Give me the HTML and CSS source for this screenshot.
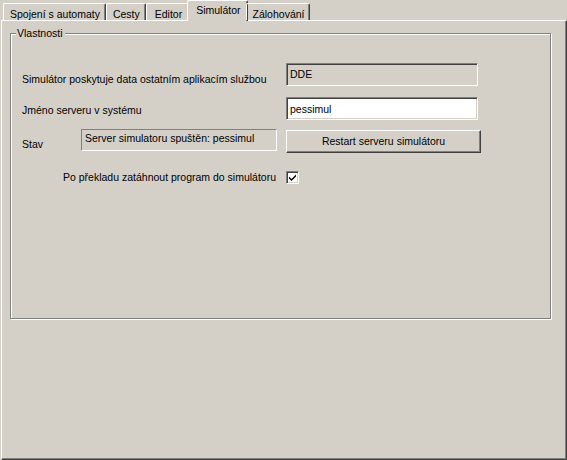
FILE: index.html
```html
<!DOCTYPE html>
<html lang="cs">
<head>
  <meta charset="UTF-8">
  <title>Simulátor</title>
  <link rel="stylesheet" href="styles.css">
</head>
<body>
  <div class="tabs">
    <div class="tab">Spojení s automaty</div>
    <div class="tab">Cesty</div>
    <div class="tab tab-editor">Editor</div>
    <div class="tab active">Simulátor</div>
    <div class="tab">Zálohování</div>
  </div>

  <div class="page">
    <div class="group">
      <span class="legend">Vlastnosti</span>

      <div class="row row-dde">
        <label class="label">Simulátor poskytuje data ostatním aplikacím službou</label>
        <div class="field readonly">DDE</div>
      </div>

      <div class="row row-name">
        <label class="label" for="serverName">Jméno serveru v systému</label>
        <input class="field" id="serverName" type="text" value="pessimul">
      </div>

      <div class="row row-state">
        <span class="label label-short">Stav</span>
        <div class="status">Server simulatoru spuštěn: pessimul</div>
        <button class="btn" type="button">Restart serveru simulátoru</button>
      </div>

      <div class="row row-check">
        <label class="label label-check">Po překladu zatáhnout program do simulátoru</label>
        <span class="checkbox">
          <svg width="9" height="9" viewBox="0 0 9 9">
            <path d="M1 3.5 L3.5 6 L8 1.5 L8 3.5 L3.5 8 L1 5.5 Z" fill="#000"/>
          </svg>
        </span>
      </div>
    </div>
  </div>
</body>
</html>
```

FILE: styles.css
```css
:root {
  --face: #d4d0c8;
  --shadow: #808080;
  --dark: #404040;
  --light: #ffffff;
}

* {
  margin: 0;
  padding: 0;
  box-sizing: border-box;
}

body {
  background: var(--face);
  font-family: 'Liberation Sans', Arial, sans-serif;
  font-size: 10.5px;
  line-height: 13px;
  color: #000;
  width: 567px;
  height: 460px;
  overflow: hidden;
}

/* tab strip */

.tabs {
  display: flex;
  align-items: flex-end;
  height: 20px;
  padding-left: 3px;
  position: relative;
  z-index: 1;
}

.tab {
  height: 17px;
  padding: 4px 5px 0 6px;
  border-top: 1px solid var(--light);
  border-left: 1px solid var(--light);
  border-right: 1px solid var(--dark);
  box-shadow: inset -1px 0 var(--shadow);
  border-radius: 2px 2px 0 0;
  white-space: nowrap;
}

.tab-editor {
  padding: 4px 6px 0 8px;
}

.tab.active {
  height: 21px;
  margin: 0 -2px -1px;
  padding: 3px 6px 0 8px;
  background: var(--face);
}

/* page */

.page {
  margin-left: 1px;
  height: 440px;
  border: 1px solid;
  border-color: var(--light) var(--dark) var(--dark) var(--light);
  box-shadow: inset -1px -1px var(--shadow);
  padding: 12px 0 0 8px;
}

.group {
  position: relative;
  width: 541px;
  height: 286px;
  border: 1px solid var(--shadow);
  box-shadow: inset 1px 1px var(--light), 1px 1px var(--light);
  padding: 29px 0 0 11px;
}

.legend {
  position: absolute;
  top: -7px;
  left: 5px;
  padding: 0 2px 0 1px;
  background: var(--face);
}

/* rows */

.row {
  display: flex;
  align-items: flex-start;
}

.label {
  width: 264px;
  white-space: nowrap;
}

.row-dde .label {
  margin-top: 10px;
}

.row-name {
  margin-top: 11px;
}

.row-name .label {
  margin-top: 7px;
}

.row-state {
  margin-top: 9px;
}

.label-short {
  width: 59px;
  margin-top: 9px;
}

.field {
  width: 192px;
  height: 23px;
  border: 1px solid;
  border-color: var(--shadow) var(--light) var(--light) var(--shadow);
  box-shadow: inset 1px 1px var(--dark), inset -1px -1px var(--face);
  padding: 3px 3px 0;
  font: inherit;
  color: #000;
  background: #fff;
}

input.field {
  padding: 0 3px;
  outline: none;
}

.field.readonly {
  background: var(--face);
  padding-top: 4px;
}

.status {
  width: 196px;
  height: 22px;
  border: 1px solid;
  border-color: var(--shadow) var(--light) var(--light) var(--shadow);
  padding: 2px 3px 0;
  white-space: nowrap;
}

.btn {
  width: 195px;
  height: 23px;
  margin: 1px 0 0 9px;
  font: inherit;
  color: #000;
  background: var(--face);
  border: 1px solid;
  border-color: var(--light) var(--dark) var(--dark) var(--light);
  box-shadow: inset -1px -1px var(--shadow);
}

.row-check {
  margin-top: 17px;
  align-items: center;
}

.label-check {
  width: 223px;
  margin-left: 41px;
  margin-top: 1px;
}

.checkbox {
  width: 13px;
  height: 13px;
  display: flex;
  align-items: center;
  justify-content: center;
  background: #fff;
  border: 1px solid;
  border-color: var(--shadow) var(--light) var(--light) var(--shadow);
  box-shadow: inset 1px 1px var(--dark), inset -1px -1px var(--face);
}
```
